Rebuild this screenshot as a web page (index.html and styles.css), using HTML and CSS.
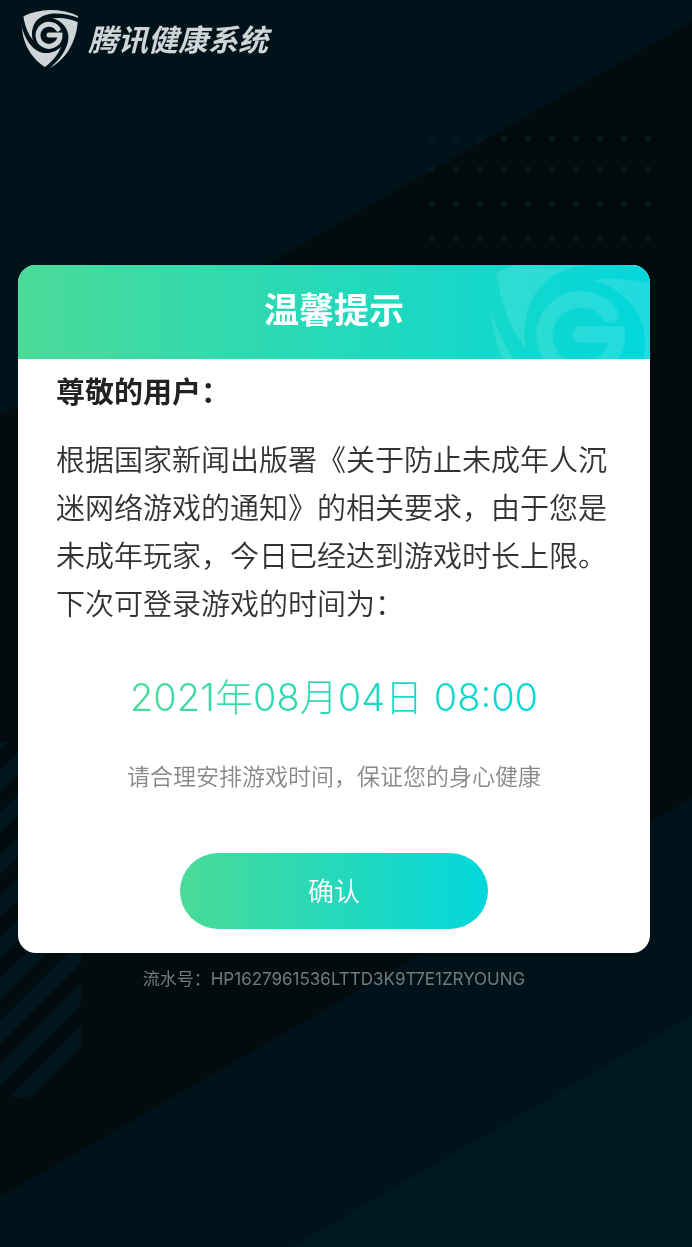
FILE: index.html
```html
<!DOCTYPE html>
<html lang="zh-CN">
<head>
  <meta charset="utf-8">
  <meta name="viewport" content="width=device-width, initial-scale=1">
  <title>腾讯健康系统</title>
  <link rel="stylesheet" href="styles.css">
</head>
<body>
  <svg class="backdrop" viewBox="0 0 692 1247" preserveAspectRatio="xMidYMid slice" aria-hidden="true">
    <defs>
      <pattern id="dots" x="420" y="0" width="24" height="300" patternUnits="userSpaceOnUse">
        <g fill="#03191d">
          <circle cx="12" cy="139" r="3"/>
          <circle cx="12" cy="169" r="3"/>
          <circle cx="12" cy="204" r="3"/>
          <circle cx="12" cy="239" r="3"/>
        </g>
      </pattern>
    </defs>
    <path fill="#00121a" d="M0 0H692V22L0 416Z"/>
    <path fill="#00131a" d="M692 798V1247H0V1197Z"/>
    <path fill="#00191f" d="M692 1016V1247H292Z"/>
    <rect x="420" y="130" width="240" height="120" fill="url(#dots)"/>
    <path fill="#00151d" d="M0 742H8L0 750ZM0 771L29 742H50L0 792ZM0 813L71 742H81V753L0 834ZM0 854L81 773V794L0 875ZM0 896L81 815V836L0 917ZM0 938L81 857V878L0 959ZM0 979L81 898V919L0 1000ZM0 1021L81 940V963L0 1044ZM0 1063L81 982V1005L0 1086ZM10 1097L81 1025V1047L31 1097Z"/>
  </svg>

  <svg width="0" height="0" class="sprite" aria-hidden="true">
    <symbol id="shield" viewBox="0 0 60 60">
      <mask id="ring">
        <rect width="60" height="60" fill="#fff"/>
        <circle cx="29" cy="25" r="17" fill="#000"/>
        <g fill="#000">
          <path id="blade" d="M12 25C12 2 36 -1 61 9L60 13C44 6 31 7 22 13Z"/>
          <use href="#blade" transform="rotate(120 29 25)"/>
          <use href="#blade" transform="rotate(240 29 25)"/>
        </g>
      </mask>
      <path mask="url(#ring)" d="M2 7C20-2 40-2 58 6C58 28 48 49 28 59C9 48 0 29 2 7Z"/>
      <path fill="none" stroke="currentColor" stroke-width="5" stroke-linecap="round" d="M38 19A11 11 0 1 0 40 25H29"/>
    </symbol>
  </svg>

  <header class="header">
    <svg class="header__logo" aria-hidden="true"><use href="#shield"/></svg>
    <span class="header__name">腾讯健康系统</span>
  </header>

  <main class="main">
    <section class="card" aria-labelledby="card-title">
      <div class="card__head">
        <h1 class="card__title" id="card-title">温馨提示</h1>
        <svg class="card__mark" aria-hidden="true"><use href="#shield"/></svg>
      </div>
      <div class="card__body">
        <h2 class="card__greeting">尊敬的用户：</h2>
        <p class="card__text">根据国家新闻出版署《关于防止未成年人沉迷网络游戏的通知》的相关要求，由于您是未成年玩家，今日已经达到游戏时长上限。下次可登录游戏的时间为：</p>
        <time class="card__time" datetime="2021-08-04T08:00">2021年08月04日 08:00</time>
        <p class="card__note">请合理安排游戏时间，保证您的身心健康</p>
        <button class="card__btn" type="button">确认</button>
      </div>
    </section>
    <p class="serial">流水号：HP1627961536LTTD3K9T7E1ZRYOUNG</p>
  </main>
</body>
</html>
```
FILE: styles.css
```css
*, *::before, *::after {
  margin: 0;
  padding: 0;
  box-sizing: border-box;
}

body {
  min-height: 100vh;
  background-color: #020c0e;
  color: #333333;
  font-family: Inter, "Noto Sans CJK SC", sans-serif;
  font-weight: 350;
}

.backdrop {
  position: fixed;
  inset: 0;
  z-index: -1;
  width: 100%;
  height: 100%;
}

.sprite {
  position: absolute;
}

.header {
  display: flex;
  align-items: center;
  gap: 8px;
  padding: 10px 20px;
  color: #cfd4d6;
}

.header__logo {
  width: 60px;
  height: 60px;
  fill: currentColor;
}

.header__name {
  font-size: 30px;
  font-style: italic;
  font-weight: 700;
  line-height: 58px;
}

.main {
  padding: 185px 42px 18px 18px;
}

.card {
  overflow: hidden;
  border-radius: 18px;
  background: #ffffff;
}

.card__head {
  position: relative;
  overflow: hidden;
  padding-bottom: 4px;
  background: linear-gradient(90deg, #4adb98, #02d7dc);
  color: #ffffff;
}

.card__title {
  font-size: 35px;
  font-weight: 700;
  line-height: 90px;
  text-align: center;
}

/* 水印 */
.card__mark {
  position: absolute;
  top: -13px;
  right: -33px;
  width: 198px;
  height: 198px;
  fill: currentColor;
  opacity: .12;
}

.card__body {
  display: flex;
  flex-direction: column;
  align-items: center;
  padding: 10px 38px 24px;
}

.card__greeting {
  align-self: stretch;
  margin-bottom: 20px;
  color: #222222;
  font-size: 29px;
  font-weight: 700;
  line-height: 48px;
}

.card__text {
  align-self: stretch;
  font-size: 29px;
  line-height: 48px;
}

.card__time {
  margin-top: 38px;
  background: linear-gradient(90deg, #4adb98, #02d7dc);
  background-clip: text;
  -webkit-background-clip: text;
  color: transparent;
  font-size: 38px;
  font-weight: 300;
  line-height: 60px;
}

.card__note {
  margin-top: 32px;
  color: #888888;
  font-size: 23px;
  line-height: 36px;
}

.card__btn {
  width: 308px;
  height: 76px;
  margin-top: 58px;
  padding-bottom: 4px;
  border: none;
  border-radius: 38px;
  background: linear-gradient(90deg, #4adb98, #02d7dc);
  color: #ffffff;
  font: inherit;
  font-size: 26px;
  cursor: pointer;
}

.serial {
  margin-top: 12px;
  color: #737b7d;
  font-size: 17px;
  font-weight: 400;
  line-height: 28px;
  text-align: center;
}
```
